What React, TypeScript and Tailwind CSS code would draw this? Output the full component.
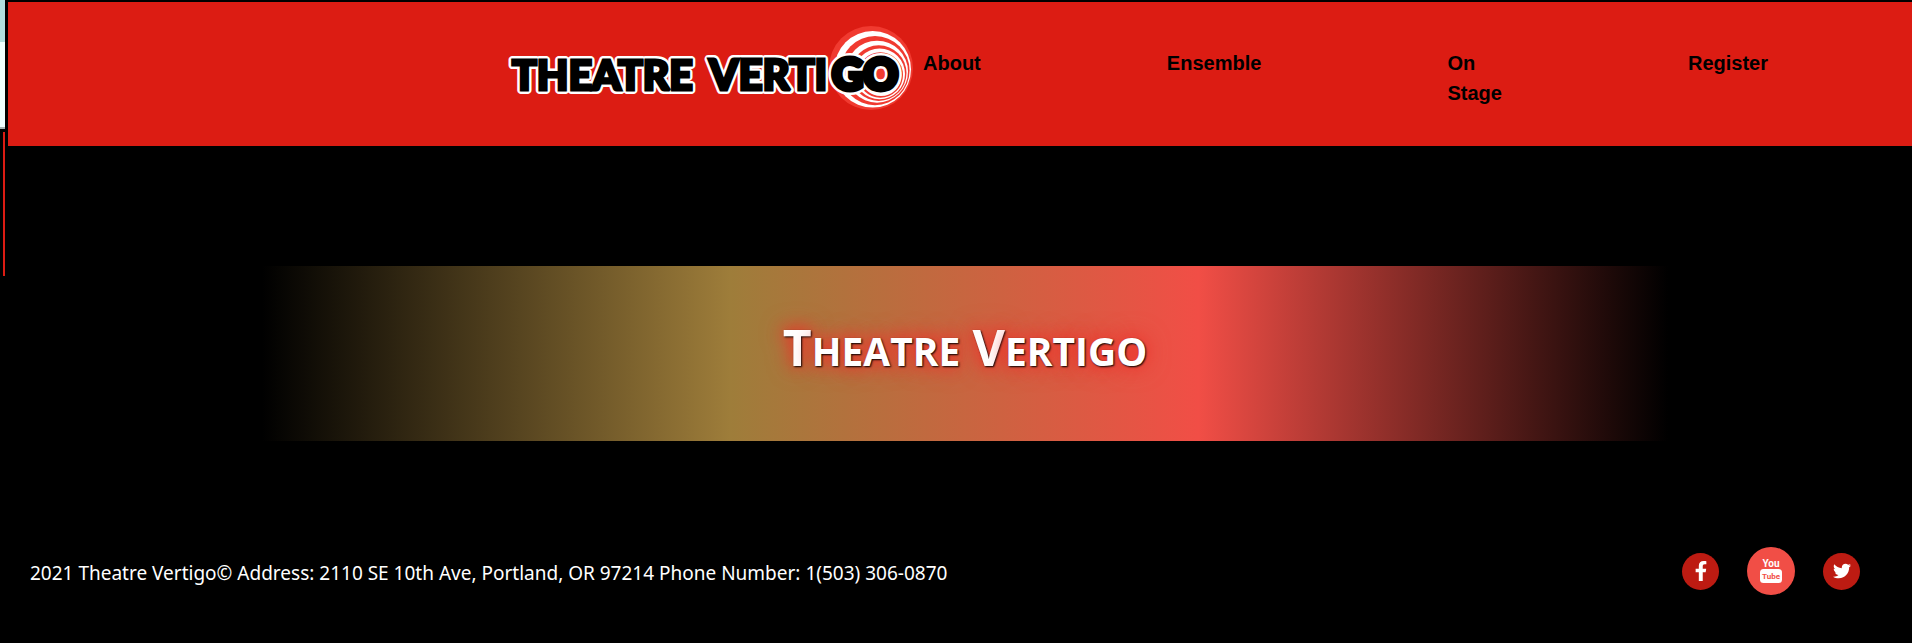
import { FaFacebookF, FaTwitter } from "react-icons/fa";

const rings = [
  { cx: 371, cy: 46, r: 42, fill: "#f03a30" },
  { cx: 372.7, cy: 47.3, r: 38.3, fill: "#fff" },
  { cx: 375, cy: 48.6, r: 34.6, fill: "#f03a30" },
  { cx: 377, cy: 49.7, r: 31, fill: "#fff" },
  { cx: 378.7, cy: 51.1, r: 27.8, fill: "#f03a30" },
  { cx: 379.6, cy: 51.9, r: 25.4, fill: "#fff" },
  { cx: 380.3, cy: 53, r: 22.7, fill: "#f03a30" },
  { cx: 381, cy: 53.5, r: 20.5, fill: "#fff" },
  { cx: 382, cy: 54, r: 18, fill: "#f03a30" },
];

const words = [
  { text: "THEATRE", x: 12, size: 41, stroke: 3 },
  { text: "VERTI", x: 209, size: 42, stroke: 3 },
  { text: "GO", x: 332, size: 43, stroke: 5 },
];

function Logo() {
  return (
    <svg width="416" height="92" viewBox="0 0 416 92" role="img" aria-label="Theatre Vertigo" className="shrink-0">
      {rings.map((c) => (
        <circle key={c.r} {...c} />
      ))}
      <g fontFamily="Lato, sans-serif" fontWeight="900">
        {words.map((w) => (
          <text
            key={w.text}
            x={w.x}
            y="68"
            fontSize={w.size}
            fill="#fff"
            stroke="#fff"
            strokeWidth={w.stroke + 5}
            strokeLinejoin="round"
          >
            {w.text}
          </text>
        ))}
        {words.map((w) => (
          <text
            key={w.text}
            x={w.x}
            y="68"
            fontSize={w.size}
            fill="#000"
            stroke="#000"
            strokeWidth={w.stroke}
            strokeLinejoin="miter"
            strokeMiterlimit="2"
          >
            {w.text}
          </text>
        ))}
      </g>
    </svg>
  );
}

function YouTubeIcon() {
  return (
    <svg width="26" height="30" viewBox="0 0 26 30" aria-hidden="true">
      <rect x="2" y="13" width="22" height="14" rx="3.5" fill="#fff" />
      <g fontFamily="Roboto, sans-serif" fontWeight="700" textAnchor="middle">
        <text x="13" y="11" fontSize="10" fill="#fff">
          You
        </text>
        <text x="13" y="23" fontSize="8" fill="#f14e46">
          Tube
        </text>
      </g>
    </svg>
  );
}

const links = ["About", "Ensemble", "On Stage", "Register"];

const titleWord =
  "inline-block text-[39px] font-bold uppercase first-letter:text-[50px] first-letter:font-bold";

export default function App() {
  return (
    <div className="flex min-h-screen bg-black">
      <div aria-hidden="true" className="flex w-[5px] shrink-0 flex-col items-end">
        <div className="h-[42px] w-full bg-[#b2dfdf]" />
        <div className="h-[85px] w-full bg-[#f0ffff]" />
        <div className="h-[2px] w-full bg-[#a5b0b0]" />
        <div className="mt-[3px] h-36 w-[2px] bg-[#dc1c13]" />
      </div>
      <div className="flex min-w-0 flex-1 flex-col pt-[2px] pl-[3px]">
        <header className="flex h-36 items-start bg-[#dc1c13] pt-5 pr-36 pl-[492px]">
          <a href="#home">
            <Logo />
          </a>
          <nav className="flex flex-1 justify-between pt-[26px] pl-[7px] font-['Liberation_Sans',sans-serif] text-[20px] leading-[30px] font-bold text-black">
            {links.map((label) => (
              <a key={label} href="#" className="w-min">
                {label}
              </a>
            ))}
          </nav>
        </header>

        <main className="pt-[120px] pr-[244px] pl-[254px]">
          <div className="flex h-[175px] items-center justify-center bg-linear-[90deg,#000_0%,#9e7d3a_33.3%,#f14e46_66.6%,#000_100%] pb-2.5">
            <h1 className="flex gap-3 font-['Open_Sans',sans-serif] leading-[60px] text-white [text-shadow:1px_1px_2px_black,0_0_25px_#ea4c46,0_0_16px_#f01e14]">
              <span className={titleWord}>Theatre</span> <span className={titleWord}>Vertigo</span>
            </h1>
          </div>
        </main>

        <footer className="mt-[106px] flex items-center justify-between pr-[52px] pl-[22px] text-white">
          <p className="pt-1 font-['Noto_Sans',sans-serif] text-[19px] leading-[30px]">
            2021 Theatre Vertigo© Address: 2110 SE 10th Ave, Portland, OR 97214 Phone Number: 1(503) 306-0870
          </p>
          <div className="flex items-center gap-7">
            <a href="#facebook" aria-label="Facebook" className="flex size-[37px] items-center justify-center rounded-full bg-[#bd1b12]">
              <FaFacebookF size={20} />
            </a>
            <a href="#youtube" aria-label="YouTube" className="flex size-12 items-center justify-center rounded-full bg-[#f14e46]">
              <YouTubeIcon />
            </a>
            <a href="#twitter" aria-label="Twitter" className="flex size-[37px] items-center justify-center rounded-full bg-[#bd1b12]">
              <FaTwitter size={18} />
            </a>
          </div>
        </footer>
      </div>
    </div>
  );
}
